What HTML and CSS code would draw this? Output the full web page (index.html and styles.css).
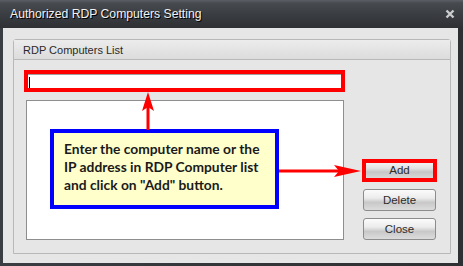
FILE: index.html
```html
<!DOCTYPE html>
<html lang="en">
<head>
    <meta charset="UTF-8">
    <title>Authorized RDP Computers Setting</title>
    <link rel="stylesheet" href="styles.css">
</head>
<body>
    <div class="window">
        <div class="titlebar">
            <span class="title">Authorized RDP Computers Setting</span>
            <svg class="close-x" width="10" height="10" viewBox="0 0 10 10">
                <path d="M1.5 1.5 L8.5 8.5 M8.5 1.5 L1.5 8.5" stroke="#c9cbcd" stroke-width="2.4" fill="none"/>
            </svg>
        </div>

        <div class="client">
            <div class="group">
                <div class="group-head">RDP Computers List</div>
                <div class="group-body">
                    <div class="left-col">
                        <div class="input-hilite">
                            <div class="name-input"><span class="caret"></span></div>
                        </div>
                        <div class="list-box"></div>
                    </div>
                    <div class="buttons">
                        <div class="add-hilite"><button class="btn btn-add">Add</button></div>
                        <button class="btn">Delete</button>
                        <button class="btn">Close</button>
                    </div>
                </div>
            </div>
        </div>

        <!-- annotation overlay -->
        <div class="callout">
            Enter the computer name or the<br>
            IP address in RDP Computer list<br>
            and click on "Add" button.
        </div>
        <svg class="arrows" width="463" height="266" viewBox="0 0 463 266">
            <line x1="148" y1="105" x2="148" y2="130" stroke="#ff0000" stroke-width="3"/>
            <path d="M148 92 L142 111 L148 107 L154 111 Z" fill="#ff0000"/>
            <line x1="279" y1="171" x2="339" y2="171" stroke="#ff0000" stroke-width="3"/>
            <path d="M361 171 L334 165 L339 171 L334 177 Z" fill="#ff0000"/>
        </svg>
    </div>
</body>
</html>
```

FILE: styles.css
```css
body {
    margin: 0;
    background: #2e3033;
    font-family: 'Liberation Sans', Arial, sans-serif;
}

.window {
    position: relative;
    width: 463px;
    height: 266px;
    display: flex;
    flex-direction: column;
    background: linear-gradient(to right, #3a3d41, #2d2f32);
}

.titlebar {
    height: 28px;
    display: flex;
    align-items: center;
    justify-content: space-between;
    padding: 0 8px 0 10px;
    background: linear-gradient(#5c6066 0, #474a4f 3px, #3a3d41 14px, #2e3034 28px);
}

.title {
    color: #f2f2f2;
    font-size: 12.2px;
    text-shadow: 1px 1px 0 #000;
    margin-top: -1px;
}

.close-x {
    margin-top: -1px;
}

.client {
    flex: 1;
    margin: 0 5px 3px 3px;
    background: #e6e6e6;
    padding: 11px 7px 9px 10px;
    display: flex;
}

.group {
    flex: 1;
    display: flex;
    flex-direction: column;
    border: 1px solid #b8b8b8;
    border-radius: 3px 3px 0 0;
}

.group-head {
    height: 19px;
    line-height: 20px;
    padding-left: 9px;
    font-size: 11px;
    color: #2a2a2a;
    background: linear-gradient(#ececec, #dcdcdc);
    border-bottom: 1px solid #b8b8b8;
}

.group-body {
    flex: 1;
    display: flex;
    padding: 10px 13px 13px 10px;
}

.left-col {
    width: 321px;
    display: flex;
    flex-direction: column;
}

.input-hilite {
    height: 22px;
    box-sizing: border-box;
    border: 4px solid #ff0000;
}

.name-input {
    height: 100%;
    background: #fff;
    border-top: 1px solid #a0a0a0;
    box-sizing: border-box;
    padding: 2px 0 0 1px;
}

.caret {
    display: block;
    width: 1px;
    height: 11px;
    background: #000;
}

.list-box {
    margin: 8px 1px 0 2px;
    height: 140px;
    box-sizing: border-box;
    background: #fff;
    border: 1px solid #8e8e8e;
}

.buttons {
    margin-left: auto;
    width: 75px;
    align-self: flex-end;
    display: flex;
    flex-direction: column;
    align-items: center;
    gap: 7px;
}

.btn {
    width: 73px;
    height: 22px;
    padding: 0;
    font-family: 'Liberation Sans', Arial, sans-serif;
    font-size: 11.5px;
    color: #2c2c2c;
    border: 1px solid #8c8c8c;
    border-radius: 3px;
    background: linear-gradient(#fbfbfb 0%, #ececec 40%, #c8c8c8 62%, #dcdcdc 100%);
}

.add-hilite {
    width: 75px;
    height: 23px;
    box-sizing: border-box;
    border: 4px solid #ff0000;
    overflow: hidden;
}

.btn-add {
    width: 67px;
    height: 15px;
    display: block;
    border: none;
    border-radius: 0;
    line-height: 13px;
    background: linear-gradient(#f2f2f2 0%, #e2e2e2 35%, #c6c6c6 60%, #d8d8d8 100%);
}

/* yellow note over the list */
.callout {
    position: absolute;
    left: 50px;
    top: 129px;
    width: 229px;
    height: 80px;
    box-sizing: border-box;
    border: 4px solid #0000ff;
    background: #ffffcc;
    padding: 7px 0 0 10px;
    font-family: 'Lato', sans-serif;
    font-weight: 700;
    font-size: 13.8px;
    line-height: 18px;
    color: #1a1a1a;
    white-space: nowrap;
}

.arrows {
    position: absolute;
    left: 0;
    top: 0;
    pointer-events: none;
}
```
